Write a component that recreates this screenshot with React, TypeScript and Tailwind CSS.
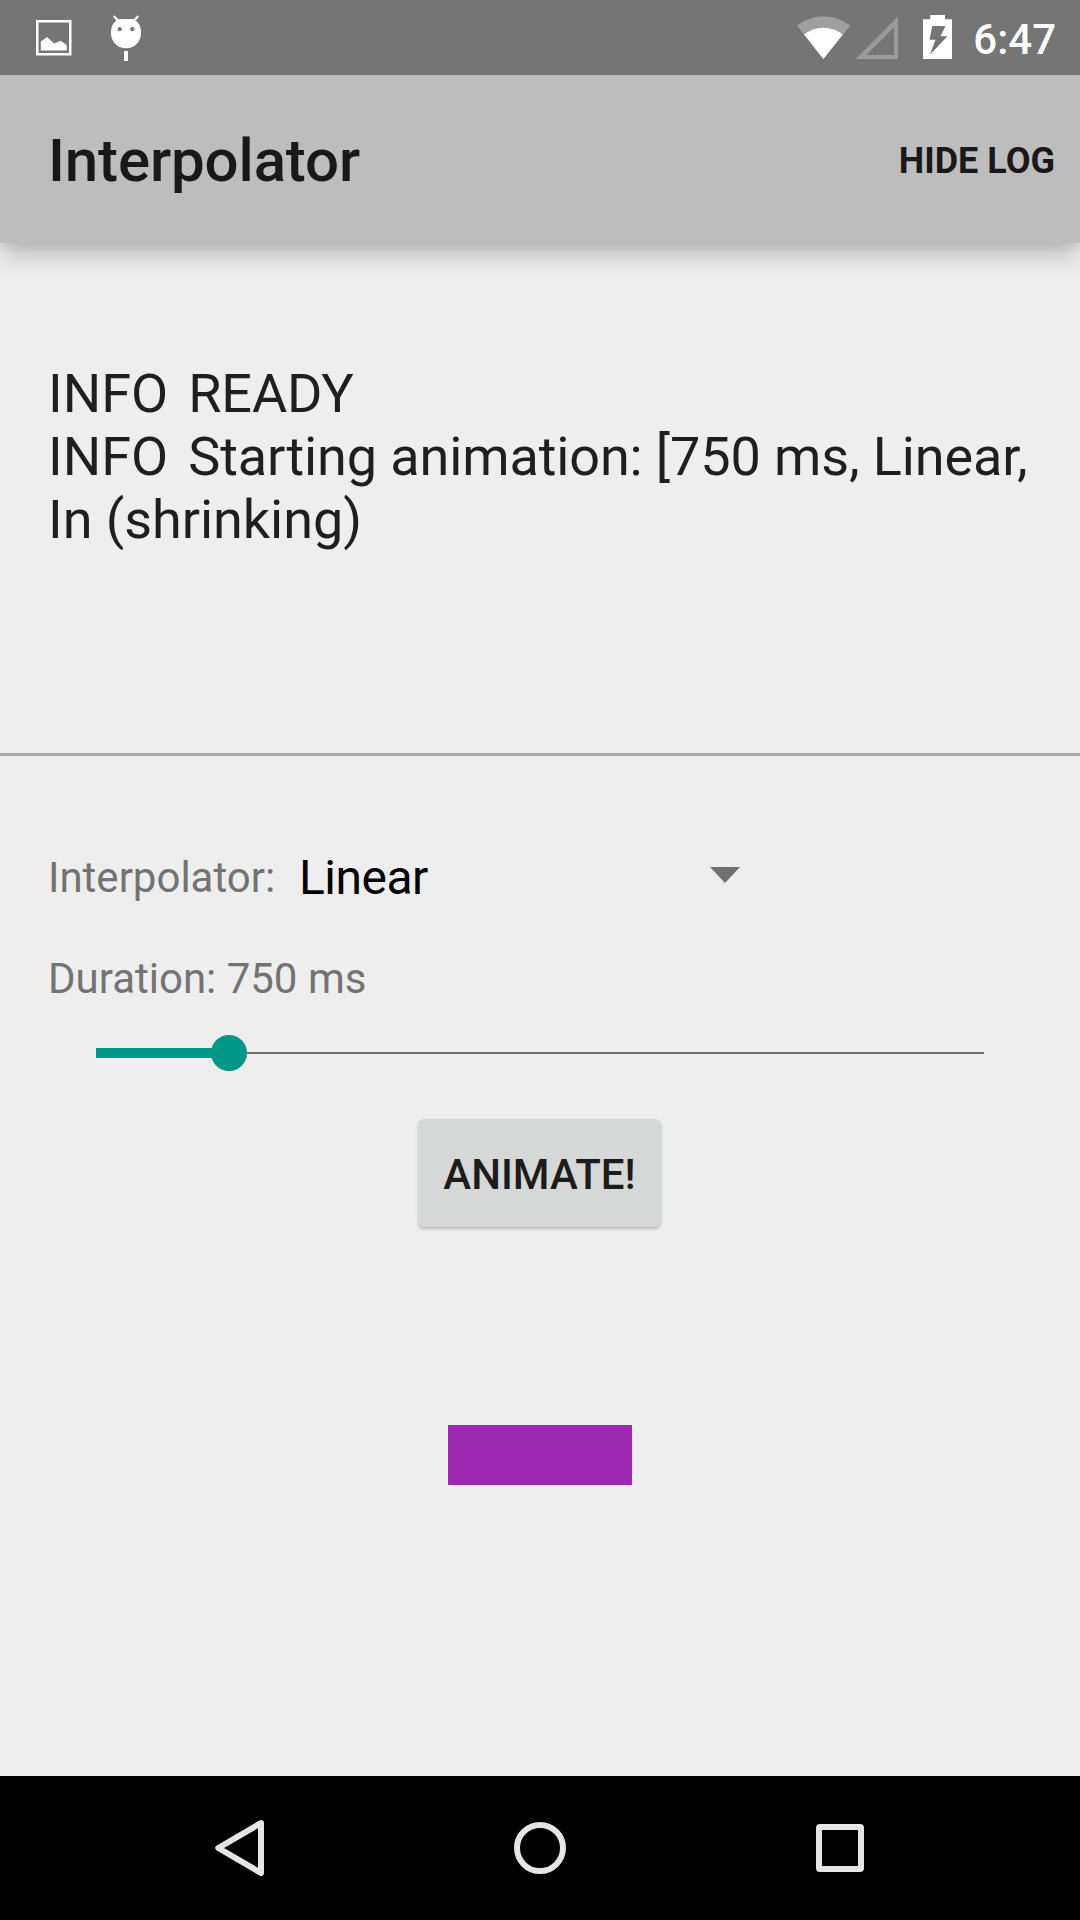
import React from "react";

function StatusBar() {
  return (
    <header className="relative z-20 flex h-[75px] items-start bg-[#757575] text-white">
      <svg className="ml-9 mt-5 h-9 w-9 shrink-0" viewBox="0 0 36 36">
        <path d="M1.25 1.25h33v33h-33z" fill="none" stroke="#fff" strokeWidth="2.5" />
        <path d="M4.8 30.6V21.5l6.2-4.6 7.3 6.5 6.2-2.6 6.2 4.2v5.6z" fill="#fff" />
      </svg>
      <svg className="ml-9 mt-3.5 h-12 w-9 shrink-0" viewBox="108 14 36 48">
        <path d="M113.8 16l5 5.5M138.2 16l-5 5.5" stroke="#fff" strokeWidth="2.2" />
        <path d="M117 20q2-1 4-1h10q2 0 4 1a15 15 0 0 1 6 13.500a15 14.800 0 0 1-30 0A15 15 0 0 1 117 20z" fill="#fff" />
        <circle cx="119.700" cy="29.200" r="2.100" fill="#757575" />
        <circle cx="132.300" cy="29.200" r="2.100" fill="#757575" />
        <path d="M124 51h4v10h-4z" fill="#fff" />
      </svg>
      <div className="ml-auto flex">
        <svg className="mt-3 h-12 w-[54px]" viewBox="797 12 54 48">
          <path d="M823.300 59L797 25.800Q809 16.200 823.500 16.200T850.200 25.800z" fill="#9f9f9f" />
          <path d="M823.300 59L804.200 34.600Q812.500 27.700 823.500 27.700T842.800 34.600z" fill="#fff" />
        </svg>
        <svg className="ml-1 mt-3 h-12 w-[44px]" viewBox="855 12 44 48">
          <path fillRule="evenodd" d="M855.500 59L898 16.200V59zM866.500 55H894V27.200z" fill="#9a9a9a" />
        </svg>
        <svg className="ml-6 mt-3 h-12 w-[30px]" viewBox="923 12 30 48">
          <path d="M930.300 15h14.700v4.200h7V59h-29V19.200h7.300z" fill="#fff" />
          <path d="M932.200 26H945.500L940.500 36.300H947.500L930 54.500L935.500 39.700H929.500z" fill="#757575" />
        </svg>
        <span className="ml-5 mr-6 mt-[15px] text-[42px] font-medium leading-[49px]">6:47</span>
      </div>
    </header>
  );
}

function AppBar() {
  return (
    <div className="relative z-10 flex h-[168px] items-center justify-between bg-[#bdbdbd] pl-12 pr-[25px] text-[#191919] shadow-[0_4px_8px_rgba(0,0,0,0.06),0_14px_24px_-2px_rgba(0,0,0,0.22)]">
      <h1 className="mt-1 text-[60px] font-medium leading-[70px] tracking-[-0.14px]">Interpolator</h1>
      <button className="mt-1 text-[36px] font-bold leading-[42px]">HIDE LOG</button>
    </div>
  );
}

function LogPanel() {
  return (
    <section className="h-[513px] border-b-[3px] border-[#a9a9a9] pl-12 pt-[119px] text-[54px] leading-[63px] tracking-[-0.12px] text-[#1f1f1f]">
      <p className="flex gap-5"><span className="tracking-normal">INFO</span><span>READY</span></p>
      <p className="flex gap-5 whitespace-nowrap"><span className="tracking-normal">INFO</span><span>Starting animation: [750 ms, Linear,</span></p>
      <p className="tracking-[-0.05px]">In (shrinking)</p>
    </section>
  );
}

function Slider({ value, max }: { value: number; max: number }) {
  const percent = (value / max) * 100;
  return (
    <div className="ml-12 mt-8 flex h-9 w-[888px] items-center">
      <div className="h-2.5 bg-[#009688]" style={{ width: `${percent}%` }} />
      <div className="z-10 -mx-[18px] h-9 w-9 shrink-0 rounded-full bg-[#009688]" />
      <div className="h-0.5 flex-1 bg-[#707070]" />
    </div>
  );
}

function Controls() {
  return (
    <section className="flex flex-1 flex-col px-12 pt-[97px] text-[42px] text-[#737373]">
      <div className="flex h-[49px] items-center">
        <span className="w-[251px] leading-[49px]">Interpolator:</span>
        <span className="flex-1 text-[48px] leading-[56px] tracking-[-0.5px] text-black">Linear</span>
        <svg className="mb-[5px] mr-[292px] h-4 w-[30px]" viewBox="0 0 30 16">
          <path d="M0 0h30L15 16z" fill="#707070" />
        </svg>
      </div>
      <p className="mt-[52px] leading-[49px]">Duration: 750 ms</p>
      <Slider value={133} max={888} />
      <button className="ml-[370px] mt-[48px] h-[108px] w-[243px] rounded-md bg-[#d6d7d7] pt-0.5 text-[42px] font-medium leading-[49px] text-[#1c1c1c] shadow-[0_2px_3px_rgba(0,0,0,0.22)]">
        ANIMATE!
      </button>
      <div className="ml-[400px] mt-[198px] h-[60px] w-[184px] bg-[#9c27b0]" />
    </section>
  );
}

function NavBar() {
  return (
    <nav className="flex h-36 items-center justify-between bg-black px-[210px]">
      <svg className="h-[60px] w-[60px]" viewBox="210 1818 60 60" fill="none" stroke="#e5e5e5" strokeWidth="6" strokeLinejoin="round">
        <path d="M261 1823L218.300 1848L261 1873z" />
      </svg>
      <svg className="h-[60px] w-[60px]" viewBox="0 0 60 60" fill="none" stroke="#e5e5e5" strokeWidth="6">
        <circle cx="30" cy="30" r="23" />
      </svg>
      <svg className="h-[60px] w-[60px]" viewBox="0 0 60 60" fill="none" stroke="#e5e5e5" strokeWidth="6" strokeLinejoin="round">
        <rect x="9" y="9" width="42" height="42" rx="1" />
      </svg>
    </nav>
  );
}

export default function App() {
  return (
    <main className="flex h-[1920px] w-[1080px] flex-col overflow-hidden bg-[#eeeeee] font-['Roboto',sans-serif]">
      <StatusBar />
      <AppBar />
      <LogPanel />
      <Controls />
      <NavBar />
    </main>
  );
}
